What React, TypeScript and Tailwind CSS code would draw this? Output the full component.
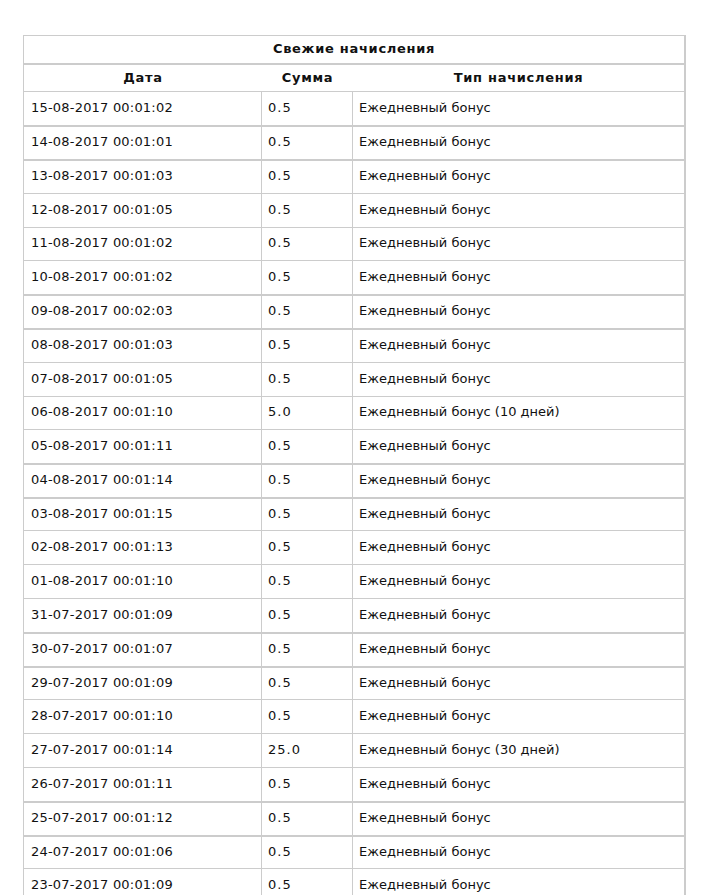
import React from "react";

const rows: [string, string, string][] = [
  ["15-08-2017 00:01:02", "0.5", "Ежедневный бонус"],
  ["14-08-2017 00:01:01", "0.5", "Ежедневный бонус"],
  ["13-08-2017 00:01:03", "0.5", "Ежедневный бонус"],
  ["12-08-2017 00:01:05", "0.5", "Ежедневный бонус"],
  ["11-08-2017 00:01:02", "0.5", "Ежедневный бонус"],
  ["10-08-2017 00:01:02", "0.5", "Ежедневный бонус"],
  ["09-08-2017 00:02:03", "0.5", "Ежедневный бонус"],
  ["08-08-2017 00:01:03", "0.5", "Ежедневный бонус"],
  ["07-08-2017 00:01:05", "0.5", "Ежедневный бонус"],
  ["06-08-2017 00:01:10", "5.0", "Ежедневный бонус (10 дней)"],
  ["05-08-2017 00:01:11", "0.5", "Ежедневный бонус"],
  ["04-08-2017 00:01:14", "0.5", "Ежедневный бонус"],
  ["03-08-2017 00:01:15", "0.5", "Ежедневный бонус"],
  ["02-08-2017 00:01:13", "0.5", "Ежедневный бонус"],
  ["01-08-2017 00:01:10", "0.5", "Ежедневный бонус"],
  ["31-07-2017 00:01:09", "0.5", "Ежедневный бонус"],
  ["30-07-2017 00:01:07", "0.5", "Ежедневный бонус"],
  ["29-07-2017 00:01:09", "0.5", "Ежедневный бонус"],
  ["28-07-2017 00:01:10", "0.5", "Ежедневный бонус"],
  ["27-07-2017 00:01:14", "25.0", "Ежедневный бонус (30 дней)"],
  ["26-07-2017 00:01:11", "0.5", "Ежедневный бонус"],
  ["25-07-2017 00:01:12", "0.5", "Ежедневный бонус"],
  ["24-07-2017 00:01:06", "0.5", "Ежедневный бонус"],
  ["23-07-2017 00:01:09", "0.5", "Ежедневный бонус"],
];

// row separator positions in the reference: 90,124,158,192,226,259,...
const heights = [34, 34, 34, 34, 33, 34, 34, 34, 34, 33, 34, 34, 33, 34, 34, 34, 34, 33, 34, 34, 34, 34, 33, 34];

export default function App() {
  return (
    <div className="h-[895px] overflow-hidden bg-white pt-[35px] pl-[23px] font-['DejaVu_Sans',Verdana,sans-serif] text-[13px] text-[#111]">
      <div className="w-[663px] border-l border-t border-r-2 border-[#cccccc]">
        <div className="flex h-[27px] items-center justify-center pb-[1px] font-bold tracking-[0.7px]">
          Свежие начисления
        </div>
        <div className="flex h-[28px] items-center border-t-2 border-[#cccccc] pb-[1px] font-bold tracking-[0.7px]">
          <div className="w-[238px] text-center">Дата</div>
          <div className="w-[91px] text-center">Сумма</div>
          <div className="flex-1 text-center">Тип начисления</div>
        </div>
        {rows.map((r, i) => {
          const thick = i % 5 === 1 || i % 5 === 2;
          return (
            <div
              key={i}
              className={
                "flex items-stretch border-[#cccccc] " +
                (thick ? "border-t-2 " : "border-t ") +
                (heights[i] === 33 ? "h-[33px]" : "h-[34px]")
              }
            >
              <div className="flex w-[238px] items-center border-r border-[#cccccc] pb-[2px] pl-[7px] tracking-[0.2px]">
                {r[0]}
              </div>
              <div className="flex w-[91px] items-center border-r border-[#cccccc] pb-[2px] pl-[6px] tracking-[1px]">
                {r[1]}
              </div>
              <div className="flex flex-1 items-center pb-[2px] pl-[6px]">{r[2]}</div>
            </div>
          );
        })}
      </div>
    </div>
  );
}
